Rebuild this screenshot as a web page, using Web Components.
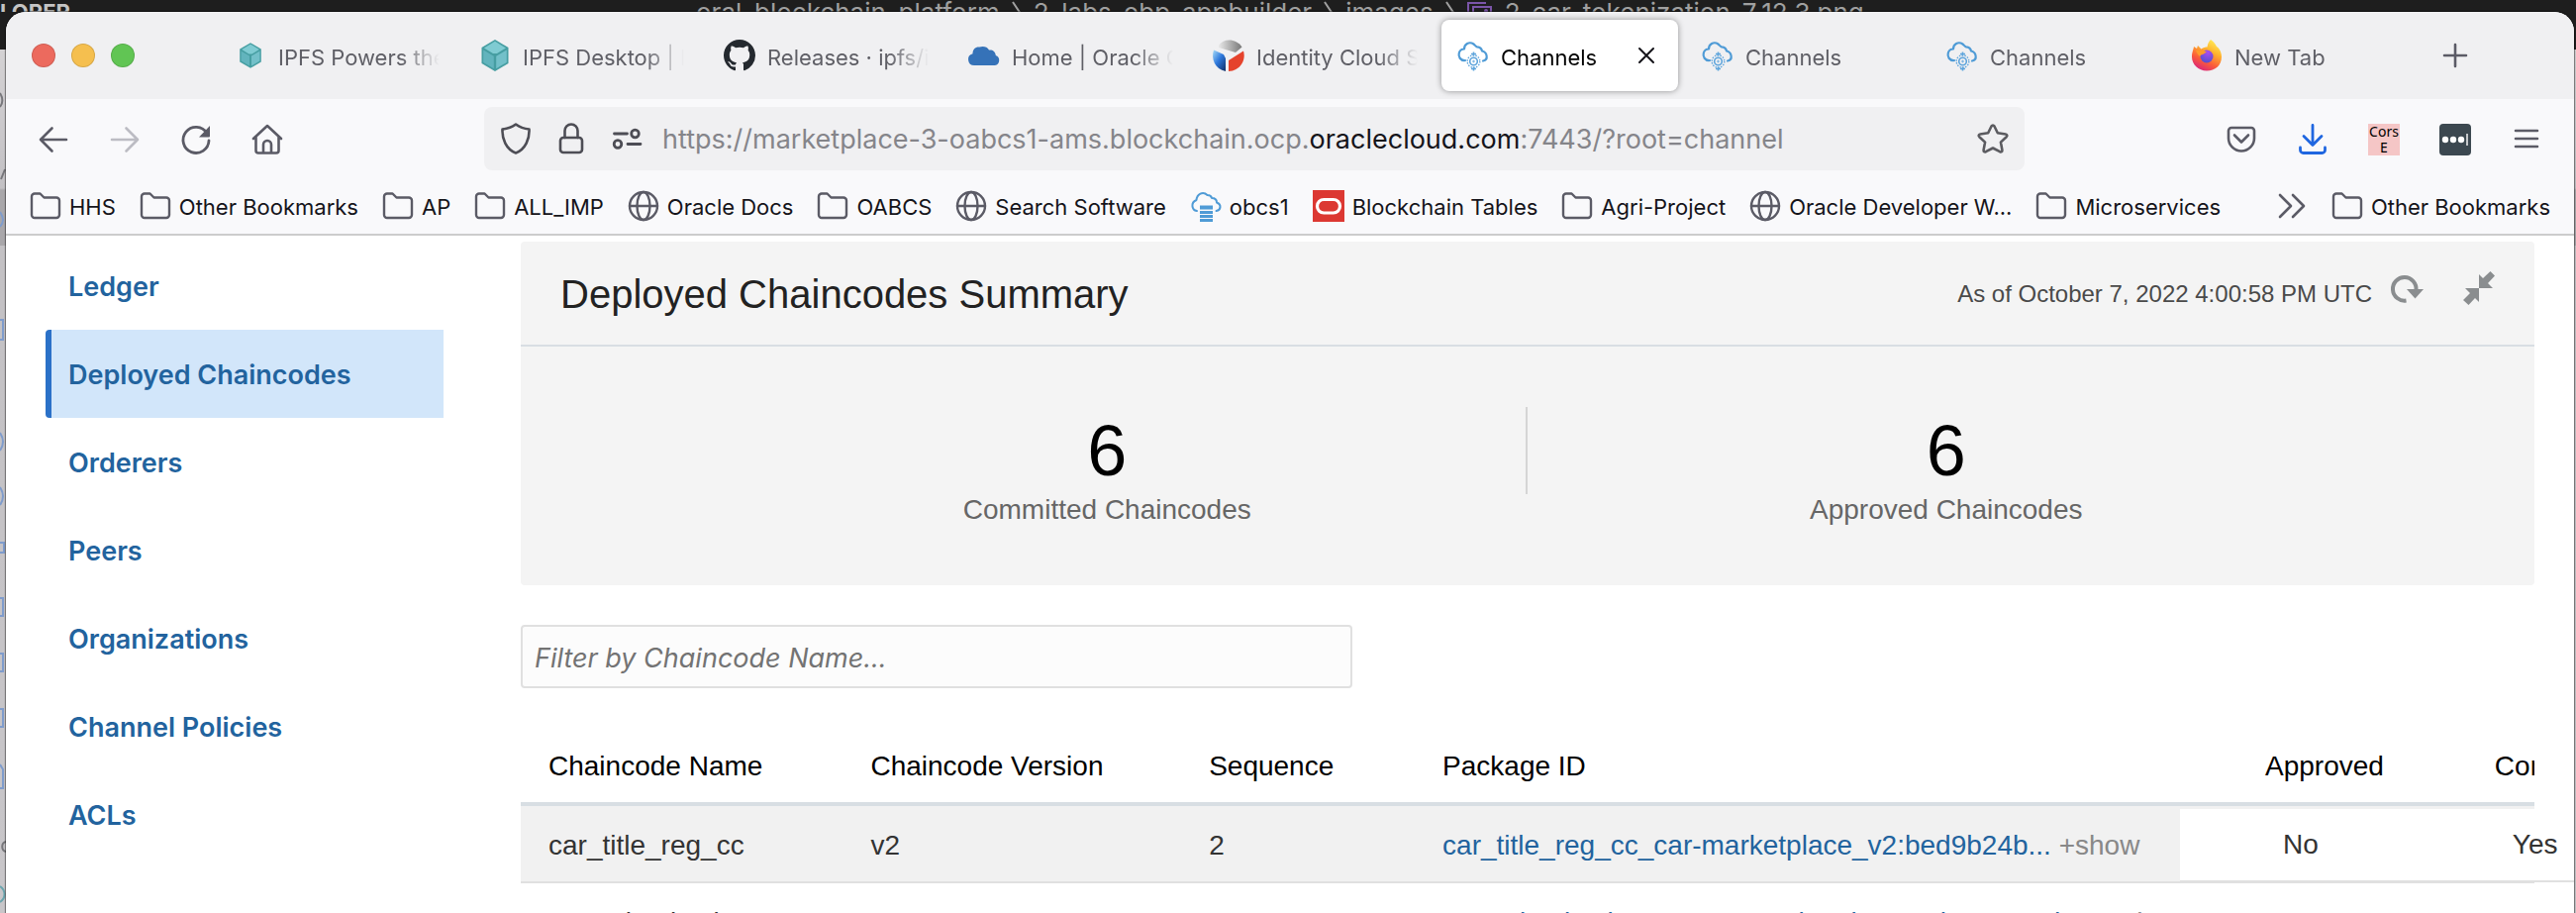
<!DOCTYPE html>
<html lang="en">
<head>
<meta charset="utf-8">
<title>Channels</title>
<style>
  html, body { margin: 0; height: 100%; overflow: hidden; }
  body { background: #1e1e1e; font-family: Inter, "Noto Sans", sans-serif; color: #15141a; }
</style>
</head>
<body>
<desk-top>
  <browser-window>
    <tab-strip slot="chrome">
      <browser-tab icon="ipfs-small" label="IPFS Powers the"></browser-tab>
      <browser-tab icon="ipfs" label="IPFS Desktop | I"></browser-tab>
      <browser-tab icon="github" label="Releases · ipfs/i"></browser-tab>
      <browser-tab icon="cloud" label="Home | Oracle C"></browser-tab>
      <browser-tab icon="identity" label="Identity Cloud S"></browser-tab>
      <browser-tab icon="channel" label="Channels" active></browser-tab>
      <browser-tab icon="channel" label="Channels"></browser-tab>
      <browser-tab icon="channel" label="Channels"></browser-tab>
      <browser-tab icon="firefox" label="New Tab"></browser-tab>
    </tab-strip>
    <nav-toolbar slot="chrome"></nav-toolbar>
    <bookmark-bar slot="chrome">
      <book-mark icon="folder">HHS</book-mark>
      <book-mark icon="folder">Other Bookmarks</book-mark>
      <book-mark icon="folder">AP</book-mark>
      <book-mark icon="folder">ALL_IMP</book-mark>
      <book-mark icon="globe">Oracle Docs</book-mark>
      <book-mark icon="folder">OABCS</book-mark>
      <book-mark icon="globe">Search Software</book-mark>
      <book-mark icon="obcs">obcs1</book-mark>
      <book-mark icon="oracle">Blockchain Tables</book-mark>
      <book-mark icon="folder">Agri-Project</book-mark>
      <book-mark icon="globe">Oracle Developer W...</book-mark>
      <book-mark icon="folder">Microservices</book-mark>
      <book-mark slot="end" icon="folder">Other Bookmarks</book-mark>
    </bookmark-bar>
    <side-nav></side-nav>
    <main-panel>
      <summary-card heading="Deployed Chaincodes Summary" asof="As of October 7, 2022 4:00:58 PM UTC">
        <stat-tile value="6" label="Committed Chaincodes"></stat-tile>
        <stat-tile value="6" label="Approved Chaincodes"></stat-tile>
      </summary-card>
      <filter-box></filter-box>
      <chaincode-table></chaincode-table>
    </main-panel>
  </browser-window>
</desk-top>

<script>
const stroke = (w, c, body) => `<g fill="none" stroke="${c}" stroke-width="${w}" stroke-linecap="round" stroke-linejoin="round">${body}</g>`;
const G = '#5b5b66';
const cube = '<path fill="#469ea2" d="M16 0 29.5 8v16L16 32 2.500 24V8z"/><path fill="#7fcbd2" d="M16 1.800 27 8.500 18 14h-4L5 8.500z"/><path fill="#62b4bd" d="M4.200 10.500 14.800 16.700v12.500L4.200 23z"/><path fill="#73c0c9" d="M27.800 10.500 17.200 16.700v12.500L27.800 23z"/>';
const ICONS = {
  'ipfs': cube,
  'ipfs-small': `<g transform="translate(3.200 3.200) scale(.8)">${cube}</g>`,
  'github': '<path transform="scale(2)" fill="#24292f" d="M8 0C3.580 0 0 3.580 0 8c0 3.540 2.290 6.530 5.470 7.590.4.070.55-.17.55-.38 0-.19-.01-.82-.01-1.490-2.010.37-2.530-.49-2.690-.94-.09-.23-.48-.94-.82-1.130-.28-.15-.68-.52-.01-.53.63-.01 1.080.58 1.230.82.72 1.210 1.870.87 2.330.66.070-.52.28-.87.51-1.070-1.780-.2-3.640-.89-3.640-3.950 0-.87.31-1.590.82-2.150-.08-.2-.36-1.020.08-2.120 0 0 .67-.21 2.200.82.64-.18 1.320-.27 2-.27.68 0 1.360.09 2 .27 1.530-1.040 2.200-.82 2.200-.82.44 1.100.16 1.920.08 2.120.51.56.82 1.270.82 2.150 0 3.070-1.870 3.750-3.650 3.950.29.25.54.73.54 1.480 0 1.070-.01 1.930-.01 2.200 0 .21.15.46.55.38A8.013 8.013 0 0016 8c0-4.420-3.580-8-8-8z"/>',
  'cloud': '<path fill="#3572b8" d="M6 26a6 6 0 0 1-1.500-11.800C4.500 9.500 7.500 7 11.500 7.500c3-1.300 8-.5 9.500 3 3.500-.5 6.500 1.500 6.800 5.500A5.200 5.200 0 0 1 27 26z"/>',
  'identity': '<defs><linearGradient id="b" x1="0" y1="0" x2=".9" y2="1"><stop offset="0" stop-color="#a8dcf8"/><stop offset=".5" stop-color="#2e78dc"/><stop offset="1" stop-color="#15356e"/></linearGradient><linearGradient id="g"><stop offset="0" stop-color="#e8e8e8"/><stop offset="1" stop-color="#777"/></linearGradient></defs><path fill="url(#g)" d="M6 5.500C11-1 23-2 29.500 7.500L23 13 6 8z"/><path fill="url(#b)" d="M1 10.500 11 15l2 4v13C2 30-2 19 1 10.500z"/><path fill="#e5432d" d="M31 11.500c3 10-4 20-15 20.500v-11z"/>',
  'channel': stroke(2.2, '#4f9bd6', '<path d="M8 21C3 21.500.8 17 1.800 13.500 2.500 11 4.500 9.500 7 9.500 7 4.500 12 1.500 16.500 4.500c1.500 1 2 2.500 3.500 2.800 2 .2 4.500 1.200 5 4.200 5 1 7 8.500 1 10"/>') + '<g fill="none" stroke="#5fa5dc"><circle cx="16.500" cy="22" r="3.800" stroke-width="1.600"/><circle cx="16.500" cy="22" r="6.300" stroke-width="1.400" stroke-dasharray="1.500 1.300"/><path stroke-width="1.600" d="M16.500 12.500v4M16.500 27.500v4M14 14.500h5M14 29.500h5" /><circle cx="16.500" cy="22" r=".8"/></g>',
  'firefox': '<defs><linearGradient id="f" x1=".8" y1="0" x2=".3" y2="1"><stop offset="0" stop-color="#fff25c"/><stop offset=".35" stop-color="#ffb52e"/><stop offset=".7" stop-color="#fb5b3a"/><stop offset="1" stop-color="#d9247c"/></linearGradient><radialGradient id="p" cx=".6" cy=".2" r=".9"><stop offset="0" stop-color="#a94cf0"/><stop offset="1" stop-color="#4a4fc8"/></radialGradient></defs><path fill="url(#f)" d="M20 0c4 3 5 5 6 7 3 2 5 6 5 10.500C31 26 24.500 31.500 16 31.500S1 25 1 17.500c0-5 1.500-7 2-10.500l3 2 1-3 3.500 3.500c2-1.500 4-2 6-2C17 4 18 2 20 0z"/><circle cx="16" cy="17" r="6.500" fill="url(#p)"/><path fill="#ff9a2b" d="M5 10.500c3 .8 5-.5 8 .5l3 1.500-2.500 1.500c-1 1.500-4 1-4.500 3C7 15 5.500 13 5 10.500z"/>',
  'folder': stroke(2.4, G, '<path d="M2 6.500a3 3 0 0 1 3-3h5.500l4 4H27a3 3 0 0 1 3 3V25a3 3 0 0 1-3 3H5a3 3 0 0 1-3-3z"/>'),
  'globe': stroke(2.4, G, '<circle cx="16" cy="16" r="14"/><ellipse cx="16" cy="16" rx="6.500" ry="14"/><path d="M2 16h28"/>'),
  'obcs': stroke(2, '#4f9bd6', '<path d="M7 21C1.500 20 .5 12.500 6.500 10 7 4 13 .5 17.500 5c2 0 4 1 4.500 3 4 0 5 2.500 5 4.500 5 2 4.500 7.500-.5 8.500"/>') + '<path fill="#4f9bd6" d="M10 15.500h13v4H10zM10 21h13v3H10zM10 25h13v3H10zM10 29h13v3H10z"/>',
  'oracle': '<path fill="#dc3832" d="M0 0h32v32H0z"/><rect x="4.500" y="9.500" width="23" height="13.500" rx="6.700" fill="none" stroke="#fff" stroke-width="3.200"/>',
  'back': stroke(2.6, G, '<path d="M29 16H3M14.500 4.500 3 16l11.500 11.500"/>'),
  'forward': stroke(2.6, '#bcbcc3', '<path d="M3 16h26M17.500 4.500 29 16 17.500 27.500"/>'),
  'reload': stroke(2.8, G, '<path d="M27 9.500A13 13 0 1 0 29 17"/>') + `<path fill="${G}" d="M30 2v10.500a1 1 0 0 1-1 1H19z"/>`,
  'home': stroke(2.6, G, '<path d="M2 15 16 2l14 13M4.500 13.500V27a2.500 2.500 0 0 0 2.500 2.500h18a2.500 2.500 0 0 0 2.500-2.500V13.500M12 29v-8a4 4 0 0 1 8 0v8"/>'),
  'shield': stroke(2.6, '#4d4d55', '<path d="M16 1.500c4 3 8.500 4.500 13.500 5C30 16 26 26.500 16 30.500 6 26.500 2 16 2.500 6.500c5-.5 9.500-2 13.500-5z"/>'),
  'lock': stroke(2.6, '#4d4d55', '<rect x="5" y="15" width="22" height="15" rx="3"/><path d="M9.500 15V8a6.500 6.500 0 0 1 13 0v7"/>'),
  'perms': stroke(2.8, '#4d4d55', '<path d="M3.500 11h13M17 21.500h13"/><circle cx="24.500" cy="11" r="3.800"/><circle cx="7" cy="21.500" r="3.800"/>'),
  'star': stroke(2.6, '#5b5b60', '<path d="M16 2.500c.8 0 1.200.5 1.500 1l3.300 6.800 8 1.200c1.700.3 1.900 1.700.9 2.700l-5.800 5.400 1.500 8c.2 1.500-1 2.200-2.300 1.600L16 25.500l-7.100 3.700c-1.300.6-2.500-.1-2.300-1.600l1.500-8-5.800-5.400c-1-1-.8-2.400.9-2.700l8-1.200L14.500 3.500c.3-.5.7-1 1.500-1z"/>'),
  'pocket': stroke(2.6, G, '<path d="M6 4h20a3 3 0 0 1 3 3v7.500a13 13 0 0 1-26 0V7a3 3 0 0 1 3-3zM9 11.500l7 7 7-7"/>'),
  'download': stroke(2.8, '#1f66e0', '<path d="M16 1.500V21M7 12.500l9 9 9-9M3.500 24v2.500a3 3 0 0 0 3 3h19a3 3 0 0 0 3-3V24"/>'),
  'keys': '<rect width="32" height="32" rx="4" fill="#3c4850"/><g fill="#fff"><circle cx="6" cy="16" r="3.200"/><circle cx="14" cy="16" r="3.200"/><circle cx="22" cy="16" r="3.200"/><path opacity=".7" d="M27 10h2v12h-2z"/></g>',
  'menu': stroke(2.6, G, '<path d="M5 7h22M5 15h22M5 23h22"/>'),
  'plus': stroke(2.6, G, '<path d="M16 5v22M5 16h22"/>'),
  'close': stroke(2, '#15141a', '<path d="M9 9l14 14M23 9 9 23"/>'),
  'more': stroke(2.6, G, '<path d="M4 5l11 11L4 27M17 5l11 11L17 27"/>'),
  'refresh': '<path fill="none" stroke="#8a8d8f" stroke-width="4" d="M14.500 28.500A11.800 11.800 0 1 1 24.500 18"/><path fill="#8a8d8f" d="M15 17h17l-8.500 9.500z"/>',
  'collapse': '<path fill="#8a8d8f" d="M16 16V2l4 4 7.500-7 4.500 4.500L25 11l5 5zM16 16v14l-4-4-6.500 7L0 28l7-7-5-5z"/>'
};

/* Registers an element whose open shadow root is built from its own styles and markup. */
function define(name, css, html) {
  customElements.define(name, class extends HTMLElement {
    constructor() { super(); this.attachShadow({ mode: 'open' }); }
    connectedCallback() {
      const t = document.createElement('template');
      const body = typeof html === 'function' ? html(k => this.getAttribute(k) || '', this) : html;
      t.innerHTML = `<style>:host,*{box-sizing:border-box}button{font:inherit;color:inherit;background:none;border:0;padding:0;margin:0;text-align:left}a{color:inherit;text-decoration:none}${css}</style>${body}`;
      this.shadowRoot.replaceChildren(t.content.cloneNode(true));
    }
  });
}

define('ui-icon', ':host{display:block;flex:none;width:32px;height:32px}svg{display:block;width:100%;height:100%;overflow:visible}',
  a => `<svg viewBox="0 0 32 32" aria-hidden="true">${ICONS[a('name')] || ''}</svg>`);

/* Editor window that peeks out behind the browser. */
const sep = '<svg width="10" height="26" viewBox="0 0 10 26" aria-hidden="true"><path d="M1 2l8 12-8 12" fill="none" stroke="#a0a0a0" stroke-width="2"/></svg>';
define('desk-top', `
  :host{display:flex;position:relative;height:100vh;padding:12px 2px 0 6px;overflow:hidden;
    background:linear-gradient(#1e1e1e 50px,#d4d2d4 50px,#c3c1c4 190px,#a9a7aa 192px,#a9a7aa 248px,#c3c1c4 248px,#c8c6c9)}
  .behind{position:absolute;top:0;left:0;right:0;height:12px;overflow:hidden;display:flex;white-space:nowrap;color:#a0a0a0;font-size:26px;line-height:26px}
  .side{flex:0 0 703px;font-size:22px;font-weight:700;color:#c4c4c4;line-height:24px}
  .path{display:flex;gap:12px}
  .edge{position:absolute;left:0;top:0;width:6px;height:100%}
  slot{display:contents}`,
  `<div class="behind"><div class="side">LORER</div><div class="path"><span>oral_blockchain_platform</span>${sep}<span>2_labs_obp_appbuilder</span>${sep}<span>images</span>${sep}
    <svg width="26" height="26" viewBox="0 0 26 26" aria-hidden="true"><g fill="none" stroke="#7b55a8" stroke-width="2"><path d="M1 20V3h18"/><path d="M6 24V7h18v17z"/></g><circle cx="19" cy="11" r="2" fill="#7b55a8"/></svg>
    <span>2_car_tokenization_7_12.3.png</span></div></div>
  <svg class="edge" aria-hidden="true"><g fill="none" stroke="#7f9ccc" stroke-width="2"><path d="M0 323h3v20H0M0 437c4 6 4 12 0 18M0 492c4 6 4 12 0 18M0 548h4v10H0M0 604h3v18H0M0 660h3v18H0M0 716h3v18H0M0 772l3 5v19H0M0 214c4 6 4 10 0 15"/><path stroke="#77777b" d="M0 94c3 5 3 10 0 14M1 181l4-10M6 850c-5 1-5 9 0 10"/><path stroke="#6aa5ae" d="M0 895c6 4 6 12 0 16"/></g></svg>
  <slot></slot>`);

define('browser-window', `
  :host{display:flex;flex-direction:column;flex:1;min-width:0;position:relative;background:#fff;border-radius:20px 20px 0 0;overflow:hidden;box-shadow:0 0 1px 1px rgba(0,0,0,.45)}
  .page{display:flex;flex:1;min-height:0}`,
  `<slot name="chrome"></slot><div class="page"><slot></slot></div>`);

define('tab-strip', `
  :host{display:flex;align-items:center;flex:none;height:88px;padding:0 24px 0 26px;background:#f0f0f2}
  .lights{display:flex;gap:16px;flex:0 0 189px}
  .lights button{width:24px;height:24px;border-radius:50%;border:1px solid rgba(0,0,0,.12)}
  .r{background:#ec6a5e}.y{background:#f5bf4f}.g{background:#61c554}
  .tabs{display:flex;gap:8px;flex:0 1 2215px;min-width:0}
  .new{padding-left:28px}`,
  `<div class="lights"><button class="r" aria-label="Close window"></button><button class="y" aria-label="Minimise window"></button><button class="g" aria-label="Zoom window"></button></div>
   <div class="tabs" role="tablist"><slot></slot></div>
   <button class="new" aria-label="Open a new tab"><ui-icon name="plus"></ui-icon></button>`);

define('browser-tab', `
  :host{display:flex;align-items:center;flex:1 1 0;min-width:0;height:72px;padding:0 16px;border-radius:8px;font-size:22px;line-height:32px;color:#5f5f66}
  :host([active]){background:#fff;color:#000;box-shadow:0 0 6px rgba(0,0,0,.4)}
  .tab{display:flex;align-items:center;gap:12px;flex:1;min-width:0}
  .label{flex:1;min-width:0;overflow:hidden;white-space:nowrap;padding-top:4px;-webkit-mask-image:linear-gradient(to left,transparent,#000 40px);mask-image:linear-gradient(to left,transparent,#000 40px)}
  .x{width:32px;height:32px}`,
  (a, el) => `<button class="tab" role="tab" aria-selected="${el.hasAttribute('active')}"><ui-icon name="${a('icon')}"></ui-icon><span class="label">${a('label')}</span></button>${el.hasAttribute('active') ? '<button class="x" aria-label="Close tab"><ui-icon name="close"></ui-icon></button>' : ''}`);

define('nav-toolbar', `
  :host{display:flex;align-items:center;justify-content:space-between;flex:none;height:80px;padding:0 32px;background:#f9f9fb}
  .group{display:flex;align-items:center;gap:40px;padding-top:2px}
  .url{display:flex;align-items:center;gap:24px;flex:0 1 1556px;min-width:0;height:64px;margin:0 203px;padding:0 16px;border-radius:8px;background:#f0f0f2}
  .text{flex:1;min-width:0;overflow:hidden;white-space:nowrap;font-size:27px;line-height:40px;padding-top:2px;color:#85858a;margin-left:-4px}
  .text b{font-weight:400;color:#15141a}
  .cors{display:block;width:32px;height:32px;background:#f5c6c6;color:#000;font:14px/16px "Noto Sans",sans-serif;text-align:center}`,
  `<div class="group"><button aria-label="Back"><ui-icon name="back"></ui-icon></button><button aria-label="Forward"><ui-icon name="forward"></ui-icon></button><button aria-label="Reload"><ui-icon name="reload"></ui-icon></button><button aria-label="Home"><ui-icon name="home"></ui-icon></button></div>
   <div class="url"><ui-icon name="shield"></ui-icon><ui-icon name="lock"></ui-icon><ui-icon name="perms"></ui-icon>
     <div class="text" role="textbox" contenteditable="true" spellcheck="false" aria-label="Address">https://marketplace-3-oabcs1-ams.blockchain.ocp.<b>oraclecloud.com</b>:7443/?root=channel</div>
     <button aria-label="Bookmark this page"><ui-icon name="star"></ui-icon></button></div>
   <div class="group"><button aria-label="Save to Pocket"><ui-icon name="pocket"></ui-icon></button><button aria-label="Downloads"><ui-icon name="download"></ui-icon></button><button class="cors">Cors E</button><button aria-label="Passwords"><ui-icon name="keys"></ui-icon></button><button aria-label="Menu"><ui-icon name="menu"></ui-icon></button></div>`);

define('bookmark-bar', `
  :host{display:flex;align-items:center;justify-content:space-between;flex:none;height:58px;padding:0 24px;background:#f9f9fb;border-bottom:2px solid #ccc}
  .list{display:flex;gap:24px;min-width:0;overflow:hidden}
  .end{display:flex;align-items:center;gap:24px}`,
  `<div class="list"><slot></slot></div><div class="end"><button aria-label="Show more bookmarks"><ui-icon name="more"></ui-icon></button><slot name="end"></slot></div>`);

define('book-mark', `
  :host{display:block;flex:none;font-size:22px;line-height:32px}
  a{display:flex;align-items:center;gap:8px}
  span{padding-top:2px}`,
  a => `<a href="#"><ui-icon name="${a('icon')}"></ui-icon><span><slot></slot></span></a>`);

define('side-nav', `
  :host{display:block;flex:none;width:442px;padding:6px 0 0 40px;font-size:27px;font-weight:600;color:#22639e}
  a{display:block;height:89px;padding-left:17px;line-height:92px;border-left:6px solid transparent}
  a.on{background:#d2e6fa;border-left-color:#2b71c8;border-radius:4px 0 0 4px}`,
  `<nav>${['Ledger', 'Deployed Chaincodes', 'Orderers', 'Peers', 'Organizations', 'Channel Policies', 'ACLs'].map((t, i) => `<a href="#"${i === 1 ? ' class="on" aria-current="page"' : ''}>${t}</a>`).join('')}</nav>`);

define('main-panel', `
  :host{display:block;flex:1;min-width:0;padding:6px 40px 0 78px;font-family:"Liberation Sans",Arial,sans-serif}`,
  '<slot></slot>');

define('summary-card', `
  :host{display:block;background:#f4f4f4;border-radius:4px}
  header{display:flex;align-items:center;height:106px;padding:2px 40px 0;border-bottom:2px solid #d8dee3}
  h1{flex:1;margin:0;font-size:40px;font-weight:400;line-height:48px;color:#222}
  time{font-size:24px;line-height:32px;color:#4a4a4a}
  .refresh{margin:-12px 40px 0 20px}.collapse{margin-top:-12px}
  .stats{display:flex;padding:61px calc(100% / 12) 60px}
  ::slotted(stat-tile){flex:1}
  ::slotted(stat-tile:first-child){--rule:#d5d5d5}`,
  a => `<header><h1>${a('heading')}</h1><time>${a('asof')}</time><button class="refresh" aria-label="Refresh"><ui-icon name="refresh"></ui-icon></button><button class="collapse" aria-label="Collapse"><ui-icon name="collapse"></ui-icon></button></header><div class="stats"><slot></slot></div>`);

define('stat-tile', `
  :host{display:grid;grid-template-columns:1fr 2px;text-align:center}
  .rule{height:88px;background:var(--rule,transparent)}
  .cell{display:flex;flex-direction:column;gap:8px;padding-top:8px}
  .value{font-size:72px;line-height:72px;color:#000}
  .label{font-size:28px;line-height:32px;color:#666}`,
  a => `<div class="cell"><span class="value">${a('value')}</span><span class="label">${a('label')}</span></div><div class="rule"></div>`);

define('filter-box', `
  :host{display:block;margin-top:40px}
  input{display:block;width:100%;max-width:840px;height:64px;padding:2px 12px 0;border:2px solid #e0e0e0;border-radius:4px;background:#fcfcfc;font:27px/32px Inter,sans-serif;color:#333}
  input::placeholder{font-style:italic;color:#737373;opacity:1}`,
  '<input type="text" aria-label="Filter by Chaincode Name" placeholder="Filter by Chaincode Name...">');

define('chaincode-table', `
  :host{display:block;margin-top:35px;font-size:28px;line-height:32px;color:#333}
  table,thead,tbody{display:block}
  tr{display:grid;grid-template-columns:16% 16.8% 11.6% 38% 11.4% 11.4%;white-space:nowrap}
  th,td{display:block;padding:0 0 0 28px;text-align:left}
  th:nth-child(n+5),td:nth-child(n+5){padding-left:86px}
  thead tr{height:84px;padding-top:28px;overflow:hidden;border-bottom:4px solid #d8dee3}
  th{font-weight:400;color:#000}
  tbody tr{height:78px;border-bottom:2px solid #e0e0e0}
  td{padding-top:24px;height:76px}
  tr.on{background:#f1f1f1}
  tr.on td:nth-child(n+5){margin-top:3px;height:74px;padding:20px 0 0 104px;background:#fff;border-bottom:2px solid #e0e0e0}
  a{color:#22639e}
  button{color:#888}`,
  `<table><thead><tr><th>Chaincode Name</th><th>Chaincode Version</th><th>Sequence</th><th>Package ID</th><th>Approved</th><th>Committed</th></tr></thead>
   <tbody><tr class="on"><td>car_title_reg_cc</td><td>v2</td><td>2</td><td><a href="#">car_title_reg_cc_car-marketplace_v2:bed9b24b...</a> <button>+show</button></td><td>No</td><td>Yes</td></tr>
   <tr><td>car_tokenization_cc</td><td>v1</td><td>2</td><td><a href="#">car_tokenization_cc_car-marketplace:eeb8799ccda...</a> <button>+show</button></td><td>Yes</td><td>Yes</td></tr></tbody></table>`);
</script>
</body>
</html>
